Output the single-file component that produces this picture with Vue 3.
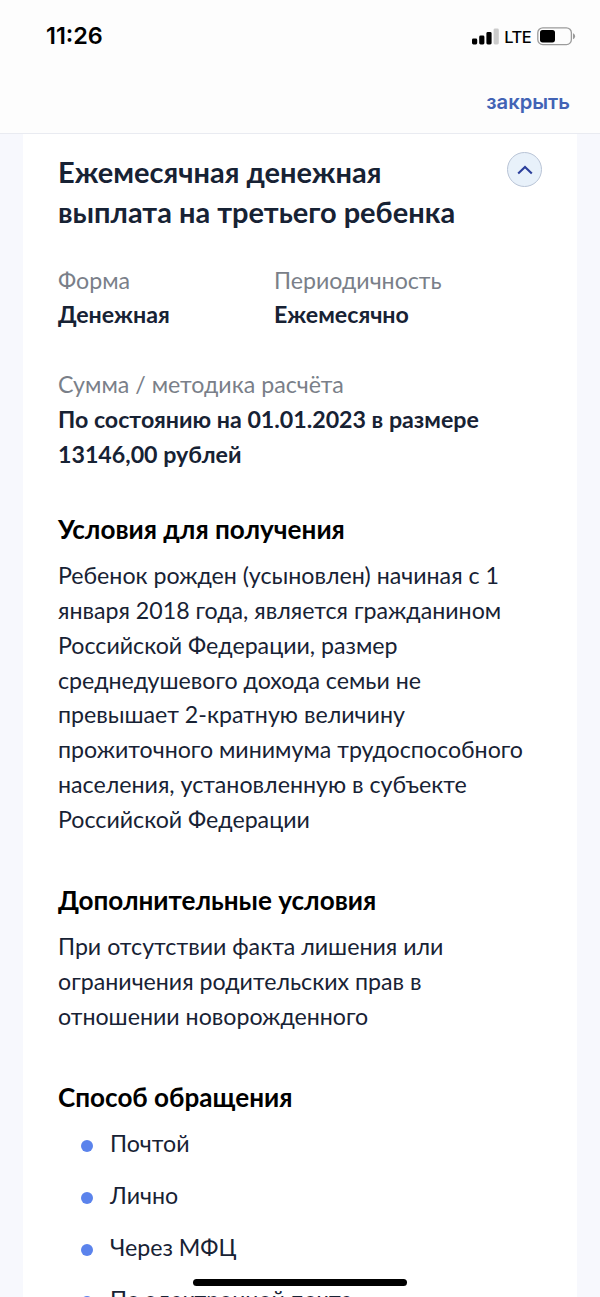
<script setup>
const summary = [
  { label: 'Форма', value: 'Денежная' },
  { label: 'Периодичность', value: 'Ежемесячно' },
  { label: 'Сумма / методика расчёта', value: 'По состоянию на 01.01.2023 в размере 13146,00 рублей', wide: true }
]

const sections = [
  {
    title: 'Условия для получения',
    text: 'Ребенок рожден (усыновлен) начиная с 1 января 2018 года, является гражданином Российской Федерации, размер среднедушевого дохода семьи не превышает 2-кратную величину прожиточного минимума трудоспособного населения, установленную в субъекте Российской Федерации'
  },
  {
    title: 'Дополнительные условия',
    text: 'При отсутствии факта лишения или ограничения родительских прав в отношении новорожденного'
  }
]

const methods = ['Почтой', 'Лично', 'Через МФЦ', 'По электронной почте']
</script>

<template>
  <div class="screen">
    <header class="top">
      <div class="status-bar">
        <span class="time">11:26</span>
        <div class="status-icons">
          <svg class="signal" width="27" height="17" viewBox="0 0 27 17">
            <rect x="0" y="10.5" width="5.2" height="6" rx="1.4" />
            <rect x="7.2" y="7.5" width="5.2" height="9" rx="1.4" />
            <rect x="14.4" y="4" width="5.2" height="12.5" rx="1.4" />
            <rect x="21.6" y="0.5" width="5.2" height="16" rx="1.4" fill="#cbcbcb" />
          </svg>
          <span class="network">LTE</span>
          <svg class="battery" width="39" height="19" viewBox="0 0 39 19">
            <rect x="0.8" y="0.8" width="33.6" height="16.8" rx="5" fill="none" stroke="#9b9b9b" stroke-width="1.3" />
            <rect x="3" y="3" width="15" height="12.4" rx="2.6" />
            <path d="M36 6.2c1.3.5 2.1 1.7 2.1 3s-.8 2.5-2.1 3z" fill="#9b9b9b" />
          </svg>
        </div>
      </div>
      <div class="nav">
        <a class="close">закрыть</a>
      </div>
    </header>

    <main class="card">
      <div class="card-header">
        <h2 class="title">Ежемесячная денежная выплата на третьего ребенка</h2>
        <button class="toggle">
          <svg width="16" height="10" viewBox="0 0 16 10" fill="none" stroke="#2b3f9b" stroke-width="2.1">
            <path d="M1.2 8.6L8 2l6.8 6.6" />
          </svg>
        </button>
      </div>

      <div class="summary">
        <div v-for="item in summary" :key="item.label" :class="{ wide: item.wide }">
          <div class="label">{{ item.label }}</div>
          <div class="value">{{ item.value }}</div>
        </div>
      </div>

      <section v-for="section in sections" :key="section.title" class="section">
        <h3>{{ section.title }}</h3>
        <p>{{ section.text }}</p>
      </section>

      <section class="section">
        <h3>Способ обращения</h3>
        <ul class="methods">
          <li v-for="method in methods" :key="method">{{ method }}</li>
        </ul>
      </section>
    </main>

    <div class="home-indicator"></div>
  </div>
</template>

<style>
body {
  margin: 0;
  overflow: hidden;
}
</style>

<style scoped>
.screen {
  position: relative;
  box-sizing: border-box;
  height: 1297px;
  overflow: hidden;
  background: #f7f8fd;
  font-family: Lato, 'Open Sans', sans-serif;
  font-size: 23.19px;
  line-height: 34.78px;
  color: #172234;
}

/* ── Header ── */
.top {
  box-sizing: border-box;
  height: 134px;
  background: #fdfdfd;
  border-bottom: 1px solid #e9ebf1;
  font-family: Inter, sans-serif;
}

.status-bar {
  display: flex;
  justify-content: space-between;
  align-items: center;
  height: 72px;
  padding: 0 24px 0 46px;
  color: #000;
}

.time {
  padding-top: 1px;
  font-size: 23.4px;
  font-weight: 600;
}

.status-icons {
  display: flex;
  align-items: center;
}

.network {
  margin: 2px 6px 0 5px;
  font-size: 16.5px;
  font-weight: 500;
  letter-spacing: -0.6px;
}

.nav {
  display: flex;
  justify-content: flex-end;
  padding: 13px 30px 0 0;
}

.close {
  font-size: 20.2px;
  font-weight: 600;
  color: #4263b5;
}

/* ── Card ── */
.card {
  margin: 0 23px;
  padding: 17.5px 35px 0;
  height: 1200px;
  background: #fff;
}

.card-header {
  display: flex;
  justify-content: space-between;
  align-items: flex-start;
}

.title {
  width: 420px;
  margin: 0;
  font-size: 28.99px;
  font-weight: 700;
  line-height: 40.58px;
}

.toggle {
  display: flex;
  align-items: center;
  justify-content: center;
  width: 35px;
  height: 35px;
  margin-top: 0.5px;
  padding: 0;
  border: 1px solid #b9c4d6;
  border-radius: 50%;
  background: #e8f1fa;
}

.summary {
  display: grid;
  grid-template-columns: 216px 1fr;
  row-gap: 34.78px;
  margin-top: 30px;
}

.wide {
  grid-column: 1 / -1;
}

.label {
  color: #7a7f89;
}

.value {
  font-weight: 700;
}

.section {
  margin-top: 43.5px;
}

.summary + .section {
  margin-top: 37.8px;
}

.section h3 {
  margin: 0 0 8.5px;
  font-size: 26.09px;
  font-weight: 700;
  line-height: 40.58px;
  color: #000;
}

.section p {
  margin: 0;
}

.methods {
  margin: 0;
  padding: 0;
  list-style: none;
}

.methods li {
  display: flex;
  align-items: center;
  gap: 17px;
  padding-left: 23px;
  margin-bottom: 17.39px;
}

.methods li::before {
  content: '';
  width: 12px;
  height: 12px;
  margin-top: 5px;
  border-radius: 50%;
  background: #5b83ec;
}

.home-indicator {
  position: absolute;
  left: 193px;
  bottom: 11px;
  width: 214px;
  height: 7px;
  border-radius: 4px;
  background: #000;
}
</style>
